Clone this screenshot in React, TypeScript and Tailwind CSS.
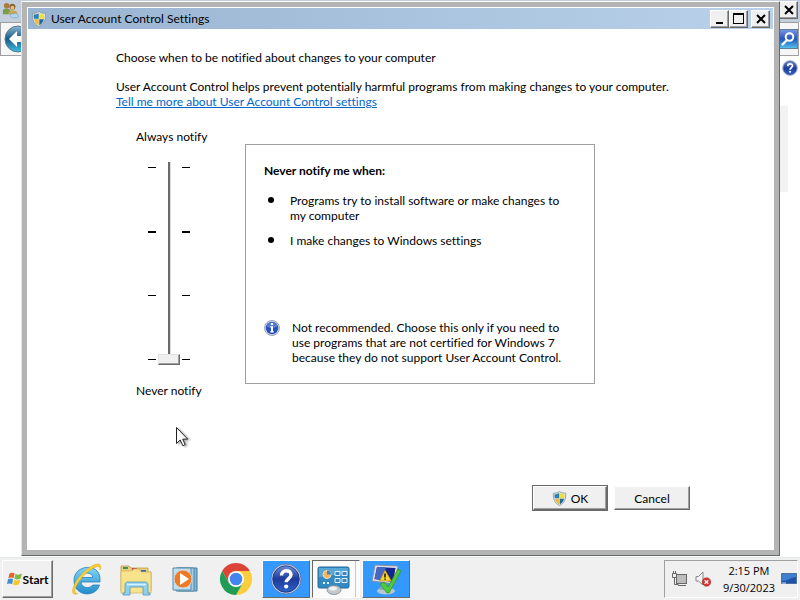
import { useState, type ReactNode } from 'react';
import clsx from 'clsx';

const raised =
  'border border-t-white border-l-white border-r-[#696969] border-b-[#696969] bg-[#f0f0f0] shadow-[inset_-1px_-1px_0_#a0a0a0]';

function Shield({ className }: { className?: string }) {
  return (
    <svg viewBox="0 0 16 16" className={className} aria-hidden="true">
      <path d="M8 .5C6 2 4 2.300 1.500 2.300 1 8 2.500 13 8 15.600 13.500 13 15 8 14.500 2.300 12 2.300 10 2 8 .5z" fill="#dfe6e6" stroke="#8b9c9f" strokeWidth=".9" />
      <path d="M7.700 2.200C6 3.200 4.500 3.500 2.700 3.600c-.1 1.700 0 3 .3 4.100h4.700z" fill="#2c80b8" />
      <path d="M8.300 2.200c1.700 1 3.200 1.300 5 1.400.1 1.700 0 3-.3 4.100H8.300z" fill="#f3df3c" />
      <path d="M3.100 8.300h4.600v6C5.200 13 3.800 11 3.100 8.300z" fill="#f0b93a" />
      <path d="M12.900 8.300H8.300v6c2.500-1.300 3.900-3.300 4.600-6z" fill="#23689f" />
    </svg>
  );
}

function InfoIcon() {
  return (
    <svg viewBox="0 0 16 16" className="size-4 shrink-0" aria-hidden="true">
      <circle cx="8" cy="8" r="7.500" fill="#d8dde8" stroke="#8590a8" strokeWidth=".8" />
      <circle cx="8" cy="8" r="6.200" fill="#2450bd" />
      <path d="M2.500 6.500a5.700 5.700 0 0 1 11 0c-3 1.800-8 1.800-11 0z" fill="#6c90dc" opacity=".7" />
      <path d="M7 3h2v2H7zM6.300 6.300H9v5h.9v1.200H6.200v-1.200H7V7.500h-.7z" fill="#fff" />
    </svg>
  );
}

function HelpIcon({ className }: { className?: string }) {
  return (
    <svg viewBox="0 0 32 32" className={className} aria-hidden="true">
      <defs>
        <linearGradient id="help" x1="0" y1="0" x2="0" y2="1">
          <stop offset="0" stopColor="#6e8fd2" />
          <stop offset=".5" stopColor="#1c3a9c" />
          <stop offset="1" stopColor="#2e62c8" />
        </linearGradient>
      </defs>
      <circle cx="16" cy="16" r="15" fill="#d3dcef" stroke="#5469a0" strokeWidth=".8" />
      <circle cx="16" cy="16" r="13.300" fill="url(#help)" stroke="#1b2f7c" strokeWidth=".8" />
      <path d="M11.500 12.500c0-6.500 9.500-6 9.500-.8 0 4-4.800 3.700-4.800 7.600" fill="none" stroke="#fff" strokeWidth="3.400" />
      <circle cx="16.200" cy="23.500" r="2.100" fill="#fff" />
    </svg>
  );
}

function CloseGlyph() {
  return (
    <svg viewBox="0 0 10 10" className="size-[10px]" aria-hidden="true">
      <path d="M1 1l8 8M9 1L1 9" stroke="#000" strokeWidth="2" />
    </svg>
  );
}

function CaptionButton({ label, children }: { label: string; children: ReactNode }) {
  return (
    <button aria-label={label} className={clsx('flex h-[18px] w-[19px] items-center justify-center', raised)}>
      {children}
    </button>
  );
}

// Control panel window that sits behind the dialog
function BackgroundWindow() {
  return (
    <div className="flex-1 bg-white">
      <div className="flex h-[22px] items-start justify-between bg-[#c3cedd] pt-px pr-[2px]">
        <svg viewBox="0 0 18 18" className="ml-[2px] mt-px size-[17px]" aria-hidden="true">
          <circle cx="5" cy="4" r="3" fill="#a87b43" />
          <path d="M1 13V9c0-3 7-3 8 0v4z" fill="#7c9b4c" />
          <circle cx="11" cy="5" r="3.200" fill="#8c6330" />
          <circle cx="11" cy="6" r="2" fill="#e7bf82" />
          <path d="M7 13v-2c0-3 8-3 9 0v2z" fill="#c8a54e" />
          <path d="M9 15.500c-1-3 2.500-4 3.500-2.500 1-2 4-1 3.500 1 2 0 2 2.500 0 2.500h-6z" fill="#b5d7ee" stroke="#6fa0c3" strokeWidth=".6" />
        </svg>
        <CaptionButton label="Close control panel">
          <CloseGlyph />
        </CaptionButton>
      </div>
      <div className="mr-px flex h-[34px] items-center justify-between border border-[#a0a0a0] bg-[#f6f6f6]">
        <button aria-label="Back" className="ml-[3px]">
          <svg viewBox="0 0 28 28" className="size-7" aria-hidden="true">
            <defs>
              <linearGradient id="back" x1="0" y1="0" x2="0" y2="1">
                <stop offset="0" stopColor="#8fb6d1" />
                <stop offset=".5" stopColor="#155a88" />
                <stop offset="1" stopColor="#3fc1e4" />
              </linearGradient>
            </defs>
            <circle cx="14" cy="14" r="13" fill="url(#back)" stroke="#5b7888" />
            <path d="M13 6l-8 8 8 8v-5h10v-6H13z" fill="#fff" />
          </svg>
        </button>
        <button aria-label="Search" className="flex h-[20px] w-[20px] items-center justify-center border border-[#5c7f9c] bg-linear-to-b from-[#7793de] via-[#2454bd] to-[#54bfe8]">
          <svg viewBox="0 0 16 16" className="size-4" aria-hidden="true">
            <circle cx="9.500" cy="6" r="3.800" fill="none" stroke="#fff" strokeWidth="2" />
            <path d="M7 9l-5 5" stroke="#fff" strokeWidth="2.400" />
          </svg>
        </button>
      </div>
      <div className="flex justify-end pt-1 pr-[2px]">
        <HelpIcon className="size-4" />
      </div>
      <div className="mt-[30px] mr-3 ml-10 h-[86px] bg-[#f2f2f2]" />
    </div>
  );
}

function Ticks() {
  return (
    <div className="my-[5px] flex flex-col justify-between">
      <div className="h-px w-2 bg-black" />
      <div className="h-[2px] w-2 bg-black" />
      <div className="h-px w-2 bg-black" />
      <div className="h-px w-2 bg-black" />
    </div>
  );
}

function NotifySlider() {
  const [level, setLevel] = useState(0);
  return (
    <div className="w-[109px] shrink-0">
      <label htmlFor="level" className="block">Always notify</label>
      <div className="mt-[18px] mb-[18px] ml-3 flex h-[203px] gap-[2px]">
        <Ticks />
        <input
          id="level"
          type="range"
          min={0}
          max={3}
          value={level}
          onChange={(e) => setLevel(Number(e.target.value))}
          className="h-full w-[22px] appearance-none bg-[linear-gradient(to_right,#6b6b6b_2px,#dcdcdc_2px)] bg-size-[3px_100%] bg-center bg-no-repeat outline-none [direction:rtl] [writing-mode:vertical-lr] [&::-webkit-slider-thumb]:h-[11px] [&::-webkit-slider-thumb]:w-[22px] [&::-webkit-slider-thumb]:appearance-none [&::-webkit-slider-thumb]:border [&::-webkit-slider-thumb]:border-t-[#e3e3e3] [&::-webkit-slider-thumb]:border-r-[#696969] [&::-webkit-slider-thumb]:border-b-[#696969] [&::-webkit-slider-thumb]:border-l-[#e3e3e3] [&::-webkit-slider-thumb]:bg-[#f0f0f0] [&::-webkit-slider-thumb]:shadow-[inset_-1px_-1px_0_#a0a0a0]"
        />
        <Ticks />
      </div>
      <p>Never notify</p>
    </div>
  );
}

function UacDialog() {
  return (
    <section
      aria-label="User Account Control Settings"
      className="absolute top-px right-5 bottom-px left-[21px] flex flex-col border border-t-white border-r-[#696969] border-b-[#696969] border-l-[#e3e3e3] bg-[#b4b4b4] p-[5px]"
    >
      <div className="flex flex-1 flex-col border border-white bg-white">
        <header className="flex h-[21px] items-center bg-linear-to-r from-[#99b4d1] to-[#b9d1ea] pr-[3px] pl-[3px]">
          <Shield className="size-4" />
          <h1 className="ml-1 flex-1">User Account Control Settings</h1>
          <CaptionButton label="Minimize">
            <span className="mt-[9px] h-[2px] w-[7px] bg-black" />
          </CaptionButton>
          <CaptionButton label="Maximize">
            <span className="size-[11px] border border-t-2 border-black" />
          </CaptionButton>
          <div className="ml-[3px]">
            <CaptionButton label="Close">
              <CloseGlyph />
            </CaptionButton>
          </div>
        </header>
        <div className="flex flex-1 flex-col pt-[21px] pr-[83px] pb-[38px] pl-[88px]">
          <h2>Choose when to be notified about changes to your computer</h2>
          <p className="mt-[14px]">
            User Account Control helps prevent potentially harmful programs from making changes to your computer.
          </p>
          <a href="#more" className="self-start text-[#0066cc] underline">
            Tell me more about User Account Control settings
          </a>
          <div className="mt-5 ml-5 flex">
            <NotifySlider />
            <div className="mt-[15px] flex h-60 w-[350px] flex-col border border-[#a0a0a0] px-[18px] pt-[18px] pb-[18px]">
              <h3 className="font-bold">Never notify me when:</h3>
              <ul className="mt-[15px] flex flex-col gap-[10px]">
                {['Programs try to install software or make changes to my computer', 'I make changes to Windows settings'].map((text) => (
                  <li key={text} className="flex gap-4 pl-1">
                    <span className="mt-1 size-[6px] shrink-0 rounded-full bg-black" />
                    {text}
                  </li>
                ))}
              </ul>
              <div className="mt-auto flex gap-3">
                <InfoIcon />
                <p>
                  Not recommended. Choose this only if you need to use programs that are not certified for Windows 7
                  because they do not support User Account Control.
                </p>
              </div>
            </div>
          </div>
          <div className="mt-auto flex items-center justify-end gap-[6px]">
            <button className="border border-[#696969]">
              <span className={clsx('flex h-6 w-[74px] items-center justify-center gap-1', raised)}>
                <Shield className="size-[15px]" />
                OK
              </span>
            </button>
            <button className={clsx('h-6 w-[76px]', raised)}>Cancel</button>
          </div>
        </div>
      </div>
    </section>
  );
}

const ieIcon = (
  <svg viewBox="0 0 34 34" className="size-[34px]" aria-hidden="true">
    <defs>
      <linearGradient id="ie" x1="0" y1="0" x2="0" y2="1">
        <stop offset="0" stopColor="#82d5f5" />
        <stop offset="1" stopColor="#208bcd" />
      </linearGradient>
    </defs>
    <path d="M31 20H12c.5 6 8.500 7.500 11.500 3h7C27 36 5 35 5 18.500 5 2 31 .5 31 17zM12.200 15.500h11.600c-.8-6-10.500-6-11.600 0z" fill="url(#ie)" stroke="#2681b9" strokeWidth=".8" fillRule="evenodd" />
    <path d="M9 31.500c-5 2.500-7-1-4-8C9 14 21 2.500 28.500 2c3.500-.2 4 2.500 2.500 6 .2-3-1-4-4-3C18 8 7 21 6 28c-.3 2.500.8 3.600 3 3.500z" fill="#f6cd35" stroke="#d9a72c" strokeWidth=".5" />
  </svg>
);

const explorerIcon = (
  <svg viewBox="0 0 34 34" className="size-[34px]" aria-hidden="true">
    <path d="M2 4h8l2 2h17v4h3v19H2z" fill="#e7cf78" stroke="#b99d4a" strokeWidth=".8" />
    <path d="M4 5h5v2H4z" fill="#4a8a5d" />
    <path d="M13 6h5v2h-5z" fill="#c65542" />
    <path d="M22 8h5v2h-5z" fill="#3a6bb4" />
    <path d="M2 9h11l2-2h5l2 3h10v21H2z" fill="#f8e38c" stroke="#cbb263" strokeWidth=".7" />
    <path d="M6 31V23c0-2 1-3 3-3h17c2 0 3 1 3 3v8h2v2h-7v-8H11v8H4v-2z" fill="#8ed0ee" stroke="#5199bf" strokeWidth=".8" />
    <path d="M8 22.500h19" stroke="#d9f3fc" strokeWidth="1.500" />
  </svg>
);

const playerIcon = (
  <svg viewBox="0 0 34 34" className="size-[34px]" aria-hidden="true">
    <path d="M9 6h19v23H9z" fill="#7eb4d4" stroke="#477d9e" />
    <path d="M7 6h18v23H7z" fill="#a4cee5" stroke="#5689a7" />
    <path d="M4 6h18v22H4z" fill="#c1dfed" stroke="#568cae" />
    <circle cx="14" cy="17" r="9" fill="#ee7a24" stroke="#d5d5d5" />
    <path d="M11 11l9 6-9 6z" fill="#fff" />
  </svg>
);

const chromeIcon = (
  <svg viewBox="0 0 34 34" className="size-[34px]" aria-hidden="true">
    <path d="M17 9h13.860A16 16 0 0 0 3.140 9l6.930 12z" fill="#dc4437" />
    <path d="M23.930 21L17 33A16 16 0 0 0 30.860 9H17z" fill="#fccd3d" />
    <path d="M10.070 21L3.140 9A16 16 0 0 0 17 33l6.930-12z" fill="#219b55" />
    <circle cx="17" cy="17" r="8" fill="#fff" />
    <circle cx="17" cy="17" r="6.300" fill="#4384ee" />
  </svg>
);

const controlPanelIcon = (
  <svg viewBox="0 0 34 34" className="size-[34px]" aria-hidden="true">
    <rect x="1" y="5" width="31" height="21" rx="1.500" fill="#3289c4" stroke="#246a96" />
    <path d="M2 6h29v6C20 11 12 15 2 15z" fill="#56a6d6" />
    <circle cx="10" cy="12.500" r="4" fill="#f5b45f" stroke="#f5dcb8" />
    <path d="M10 12.500V8.500a4 4 0 0 1 4 4z" fill="#3289c4" />
    <path d="M18 9.500h5v4h-5zM25 9.500h5v4h-5zM18 16.500h5v4h-5zM25 16.500h5v4h-5z" fill="#3d87bd" stroke="#dff2fb" />
    <path d="M6 21h2M10 21h2" stroke="#e3f4fb" strokeWidth="2" />
    <ellipse cx="17" cy="28" rx="7" ry="4.500" fill="#c3c8cc" stroke="#808a91" strokeWidth=".8" />
    <ellipse cx="16" cy="26.500" rx="4" ry="2" fill="#eef0f1" />
  </svg>
);

const actionIcon = (
  <svg viewBox="0 0 34 34" className="size-[34px]" aria-hidden="true">
    <ellipse cx="17" cy="29" rx="9" ry="3.500" fill="#b8c6d0" />
    <path d="M12 22h6l1 6h-8z" fill="#93a3ae" />
    <path d="M6 3l23 1-3 18L3 19z" fill="#dbe1ea" stroke="#838fa5" />
    <path d="M8 5l18.500 1-2.500 14L5.500 17z" fill="#15258f" />
    <path d="M8 5l9 .5L13 18l-7.500-1z" fill="#4867c5" />
    <path d="M16 8l6.500 11h-12z" fill="#f7d32d" stroke="#a87c12" strokeWidth=".6" />
    <path d="M16 11.500v4M16 16.500v1.300" stroke="#111" strokeWidth="1.500" />
    <path d="M11 22l4-2 4 5L29 7l3 2L20 31h-2z" fill="#4ecb3a" stroke="#2b8e2a" strokeWidth=".7" />
  </svg>
);

const apps = [
  { name: 'Internet Explorer', icon: ieIcon, state: 'idle' },
  { name: 'Windows Explorer', icon: explorerIcon, state: 'idle' },
  { name: 'Media Player', icon: playerIcon, state: 'idle' },
  { name: 'Chrome', icon: chromeIcon, state: 'idle' },
  { name: 'Help', icon: <HelpIcon className="size-8" />, state: 'flash' },
  { name: 'Control Panel', icon: controlPanelIcon, state: 'active' },
  { name: 'Action Center', icon: actionIcon, state: 'flash' },
];

function Taskbar() {
  return (
    <footer className="flex h-[43px] items-stretch border-t border-[#e3e9ea] bg-[#f0f0f0] pt-[2px] pb-[2px] pl-[2px]">
      <button className={clsx('flex w-[51px] items-center justify-center font-bold', raised)}>
        <svg viewBox="0 0 16 16" className="size-4" aria-hidden="true">
          <path d="M2.500 2.500c2-1.300 3.500-1 5.200 0L6.500 7.300c-1.700-1-3.400-1-5.200 0z" fill="#e5642d" />
          <path d="M8.500 3c2 1 3.800 1 6.500-.5l-1.400 5c-2 1.200-4.200 1.300-6.200.3z" fill="#7fba42" />
          <path d="M1 8.300c1.900-1.100 3.500-1 5.200 0L5 13.200c-1.600-1-3.300-1-5 0z" fill="#3d8fd1" />
          <path d="M7.200 8.700c2 1 4 .9 6.100-.3L12 13.300c-2 1.300-4.200 1.300-6 .3z" fill="#f5c62f" />
        </svg>
        Start
      </button>
      <nav className="ml-[9px] flex gap-[2px]">
        {apps.map((app) => (
          <button
            key={app.name}
            aria-label={app.name}
            className={clsx(
              'flex w-12 items-center justify-center border',
              app.state === 'idle' && 'border-transparent',
              app.state === 'flash' && 'border-t-white border-r-[#696969] border-b-[#696969] border-l-white bg-[#3399ff]',
              app.state === 'active' && 'border-t-[#696969] border-r-white border-b-white border-l-[#696969] bg-[#fbfbfb] pr-1 shadow-[inset_-3px_0_0_#fbfbfb,inset_-4px_0_0_#c8c8c8]'
            )}
          >
            {app.icon}
          </button>
        ))}
      </nav>
      <div className="mr-[2px] ml-auto flex items-center border border-t-[#a0a0a0] border-r-white border-b-white border-l-[#a0a0a0] pl-[6px]">
        <svg viewBox="0 0 16 16" className="size-4" fill="none" stroke="#666" aria-hidden="true">
          <rect x="5.500" y="3.500" width="10" height="9" fill="#bdbdbd" />
          <path d="M7 14.500h8M1.500 2.500h4v4h-4zM2.500 0v2M4.500 0v2M3.500 7v6.500h4" />
        </svg>
        <svg viewBox="0 0 16 16" className="ml-2 size-4" aria-hidden="true">
          <path d="M1 5.500h2.500L8 1v13l-4.500-4H1z" fill="#f4f4f4" stroke="#888" />
          <circle cx="11.500" cy="11" r="4.300" fill="#d6342f" stroke="#a52320" strokeWidth=".5" />
          <path d="M9.700 9.200l3.600 3.600M13.300 9.200l-3.600 3.600" stroke="#fff" strokeWidth="1.300" />
        </svg>
        <div className="ml-3 text-center font-['Open_Sans',sans-serif] text-[11px] leading-[17px]">
          <p>2:15 PM</p>
          <p>9/30/2023</p>
        </div>
        <button aria-label="Show desktop" className="ml-[6px]">
          <svg viewBox="0 0 16 14" className="h-[14px] w-4" aria-hidden="true">
            <path d="M.5 1.500h15v10H.5z" fill="#1f52a8" stroke="#4c6e9c" />
            <path d="M1 2h14v3C10 5 7 9 1 9z" fill="#3f7fcf" />
            <path d="M1 10.500h4v1H1z" fill="#d5e6f7" />
          </svg>
        </button>
      </div>
    </footer>
  );
}

export default function App() {
  return (
    <div className="flex min-h-screen flex-col bg-white font-[Lato,'Open_Sans',sans-serif] text-[12px] leading-[15px] text-black [font-variant-ligatures:none]">
      <main className="relative flex min-h-[556px] flex-1 flex-col">
        <BackgroundWindow />
        <UacDialog />
        {/* mouse pointer */}
        <svg viewBox="0 0 14 21" className="pointer-events-none absolute top-[426px] left-[175px] h-[21px] w-[14px] drop-shadow-[2px_1px_1px_rgba(0,0,0,0.35)]" aria-hidden="true">
          <path d="M1.500 1.500v16l3.700-3.500 2.600 5.700 2.400-1.100-2.500-5.500h5z" fill="#fff" stroke="#222" />
        </svg>
      </main>
      <Taskbar />
    </div>
  );
}
